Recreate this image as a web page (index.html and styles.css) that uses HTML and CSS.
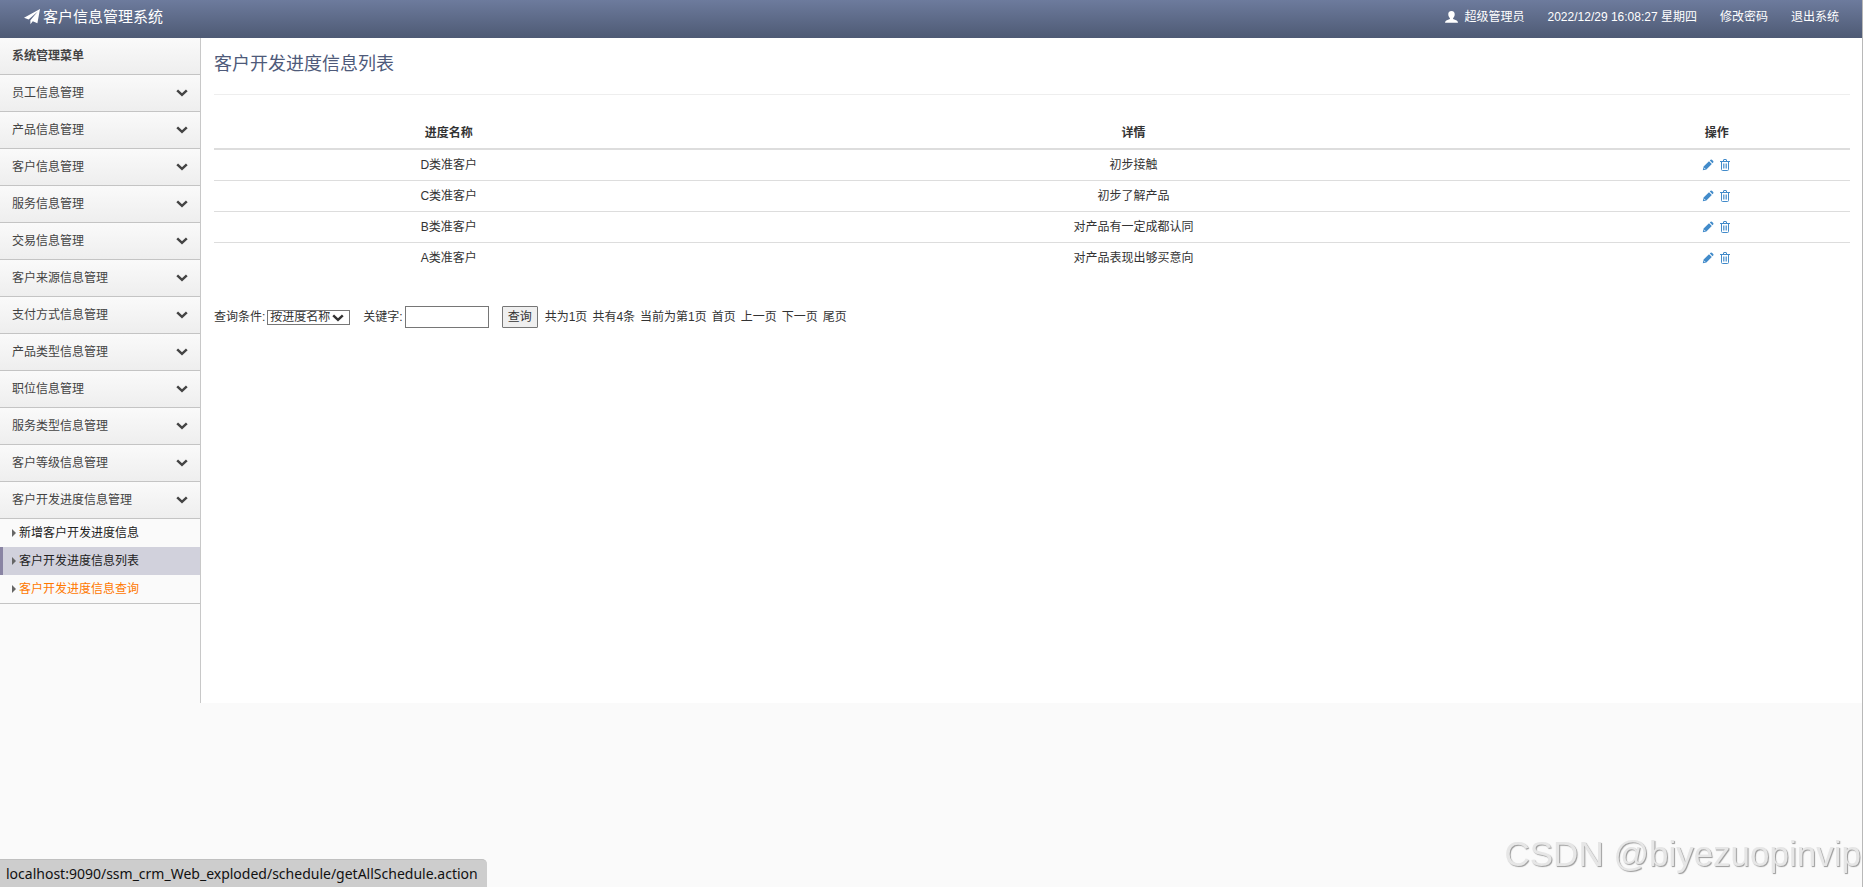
FILE: index.html
```html
<!DOCTYPE html>
<html lang="zh-CN">
  <head>
    <meta charset="UTF-8" />
    <title>客户信息管理系统</title>
    <link rel="stylesheet" href="styles.css" />
  </head>
  <body>
    <!-- shared icons -->
    <svg class="sprite" aria-hidden="true">
      <symbol id="chevron" viewBox="0 0 12 8">
        <path d="M1.2 1.4 L6 5.8 L10.8 1.4" fill="none" stroke="currentColor" stroke-width="2.5" />
      </symbol>
      <symbol id="pencil" viewBox="0 0 12 12">
        <path d="M0.8 11.2 L1.6 7.6 L7 2.2 L9.8 5 L4.4 10.4 Z M7.8 1.5 L8.6 0.8 Q9.4 0.2 10.2 0.9 L11.2 1.9 Q11.8 2.6 11.2 3.4 L10.5 4.2 Z" fill="currentColor" />
        <path d="M2 8.8 L3.2 10" fill="none" stroke="#fff" stroke-width="0.8" />
      </symbol>
      <symbol id="trash" viewBox="0 0 12 12">
        <path d="M1 2.5 H11 M4.5 2.5 V1 Q4.5 0.5 5 0.5 H7 Q7.5 0.5 7.5 1 V2.5 M2.5 2.5 V10.5 Q2.5 11.5 3.5 11.5 H8.5 Q9.5 11.5 9.5 10.5 V2.5" fill="none" stroke="currentColor" />
        <path d="M4.5 4.5 V9.5 M6 4.5 V9.5 M7.5 4.5 V9.5" fill="none" stroke="currentColor" stroke-width="0.8" />
      </symbol>
    </svg>

    <div class="header">
      <a class="brand" href="#">
        <svg class="icon-plane" viewBox="0 0 16 16">
          <path d="M16 0 L13.4 14.2 L8.8 12.2 L6.4 15.3 V11.2 L13.8 2.6 L4.6 10.6 L0 8.8 Z" fill="#fff" />
        </svg>
        客户信息管理系统
      </a>
      <div class="user-nav">
        <span class="user">
          <svg class="icon-user" viewBox="0 0 13 12">
            <path d="M6.5 0 C4.2 0 3.2 1.5 3.3 3.4 C3.4 5 4 6.2 4.9 7 V8 L1.3 9.4 Q0 10 0 11.8 H13 Q13 10 11.7 9.4 L8.1 8 V7 C9 6.2 9.6 5 9.7 3.4 C9.8 1.5 8.8 0 6.5 0 Z" fill="#fff" />
          </svg>
          超级管理员
        </span>
        <span>2022/12/29 16:08:27 星期四</span>
        <a href="#">修改密码</a>
        <a href="#">退出系统</a>
      </div>
    </div>

    <div class="wrapper">
      <div class="sidebar">
        <div class="menu-title">系统管理菜单</div>
        <a class="menu-item" href="#">员工信息管理<svg class="icon-chevron"><use href="#chevron" /></svg></a>
        <a class="menu-item" href="#">产品信息管理<svg class="icon-chevron"><use href="#chevron" /></svg></a>
        <a class="menu-item" href="#">客户信息管理<svg class="icon-chevron"><use href="#chevron" /></svg></a>
        <a class="menu-item" href="#">服务信息管理<svg class="icon-chevron"><use href="#chevron" /></svg></a>
        <a class="menu-item" href="#">交易信息管理<svg class="icon-chevron"><use href="#chevron" /></svg></a>
        <a class="menu-item" href="#">客户来源信息管理<svg class="icon-chevron"><use href="#chevron" /></svg></a>
        <a class="menu-item" href="#">支付方式信息管理<svg class="icon-chevron"><use href="#chevron" /></svg></a>
        <a class="menu-item" href="#">产品类型信息管理<svg class="icon-chevron"><use href="#chevron" /></svg></a>
        <a class="menu-item" href="#">职位信息管理<svg class="icon-chevron"><use href="#chevron" /></svg></a>
        <a class="menu-item" href="#">服务类型信息管理<svg class="icon-chevron"><use href="#chevron" /></svg></a>
        <a class="menu-item" href="#">客户等级信息管理<svg class="icon-chevron"><use href="#chevron" /></svg></a>
        <a class="menu-item" href="#">客户开发进度信息管理<svg class="icon-chevron"><use href="#chevron" /></svg></a>
        <div class="submenu">
          <a href="#">新增客户开发进度信息</a>
          <a class="active" href="#">客户开发进度信息列表</a>
          <a class="current" href="#">客户开发进度信息查询</a>
        </div>
      </div>

      <div class="content">
        <h1>客户开发进度信息列表</h1>
        <table class="table">
          <thead>
            <tr>
              <th class="col-name">进度名称</th>
              <th class="col-detail">详情</th>
              <th>操作</th>
            </tr>
          </thead>
          <tbody>
            <tr>
              <td>D类准客户</td>
              <td>初步接触</td>
              <td>
                <div class="actions">
                  <a href="#" aria-label="编辑"><svg><use href="#pencil" /></svg></a>
                  <a href="#" aria-label="删除"><svg><use href="#trash" /></svg></a>
                </div>
              </td>
            </tr>
            <tr>
              <td>C类准客户</td>
              <td>初步了解产品</td>
              <td>
                <div class="actions">
                  <a href="#" aria-label="编辑"><svg><use href="#pencil" /></svg></a>
                  <a href="#" aria-label="删除"><svg><use href="#trash" /></svg></a>
                </div>
              </td>
            </tr>
            <tr>
              <td>B类准客户</td>
              <td>对产品有一定成都认同</td>
              <td>
                <div class="actions">
                  <a href="#" aria-label="编辑"><svg><use href="#pencil" /></svg></a>
                  <a href="#" aria-label="删除"><svg><use href="#trash" /></svg></a>
                </div>
              </td>
            </tr>
            <tr>
              <td>A类准客户</td>
              <td>对产品表现出够买意向</td>
              <td>
                <div class="actions">
                  <a href="#" aria-label="编辑"><svg><use href="#pencil" /></svg></a>
                  <a href="#" aria-label="删除"><svg><use href="#trash" /></svg></a>
                </div>
              </td>
            </tr>
          </tbody>
        </table>

        <form class="search">
          <div class="field">
            <label for="cond">查询条件:</label>
            <div class="select-box">
              <select id="cond" name="cond">
                <option>按进度名称</option>
              </select>
              <svg class="select-arrow"><use href="#chevron" /></svg>
            </div>
          </div>
          <div class="field">
            <label for="keyword">关键字:</label>
            <input type="text" id="keyword" name="name" />
          </div>
          <button type="button">查询</button>
          <div class="pager">
            <span>共为1页</span>
            <span>共有4条</span>
            <span>当前为第1页</span>
            <a href="#">首页</a>
            <a href="#">上一页</a>
            <a href="#">下一页</a>
            <a href="#">尾页</a>
          </div>
        </form>
      </div>
    </div>

    <div class="status-bar">localhost:9090/ssm_crm_Web_exploded/schedule/getAllSchedule.action</div>
    <div class="watermark">CSDN @biyezuopinvip</div>
  </body>
</html>
```
FILE: styles.css
```css
* {
  box-sizing: border-box;
}
body {
  margin: 0;
  min-height: 100vh;
  background: #fafafa;
  border-right: 1px solid #b8b8b8;
  color: #333;
  font-family: "Liberation Sans", "Noto Sans CJK SC", sans-serif;
  font-size: 12px;
  line-height: 18px;
}
a {
  color: inherit;
  text-decoration: none;
}
.sprite {
  display: none;
}

.header {
  display: flex;
  justify-content: space-between;
  height: 38px;
  padding: 0 23px 0 24px;
  background: linear-gradient(#6d7b9d, #4e5a74);
  color: #fff;
  line-height: 34px;
}
.brand {
  display: flex;
  align-items: center;
  gap: 3px;
  height: 34px;
  font-size: 15px;
}
.icon-plane {
  width: 16px;
  height: 16px;
}
.user-nav {
  display: flex;
  gap: 23px;
}
.user {
  display: flex;
  align-items: center;
  gap: 7px;
  height: 34px;
}
.icon-user {
  width: 13px;
  height: 12px;
}

.wrapper {
  display: flex;
  min-height: 75vh;
}
.sidebar {
  width: 201px;
  flex-shrink: 0;
  border-right: 1px solid #c8c8c8;
}
.menu-title,
.menu-item {
  display: flex;
  align-items: center;
  justify-content: space-between;
  height: 37px;
  padding: 0 12px;
  border-bottom: 1px solid #c4c4c4;
  background: linear-gradient(#fafafa, #eee);
  color: #444;
}
.menu-title {
  font-weight: bold;
}
.icon-chevron {
  width: 12px;
  height: 8px;
}
.submenu {
  border-bottom: 1px solid #c4c4c4;
}
.submenu a {
  display: flex;
  align-items: center;
  gap: 3px;
  height: 28px;
  padding-left: 12px;
  color: #222;
}
.submenu a::before {
  content: "";
  border: 4px solid transparent;
  border-left-color: #666;
  border-right: 0;
}
.submenu .active {
  padding-left: 9px;
  border-left: 3px solid #8984a3;
  background: #d1d1dc;
}
.submenu .current {
  color: #ff7800;
}

.content {
  flex: 1;
  padding: 0 12px 0 13px;
  background: #fff;
}
h1 {
  margin: 0 0 22px;
  padding: 13px 0 17px;
  border-bottom: 1px solid #eee;
  color: #4e5a7a;
  font-size: 18px;
  font-weight: normal;
  line-height: 26px;
}
.table {
  width: 100%;
  border-collapse: separate;
  border-spacing: 0;
  table-layout: fixed;
  text-align: center;
}
.table th,
.table td {
  padding: 6px;
  border-bottom: 1px solid #ddd;
}
.table th {
  padding: 7px 6px 5px;
  border-bottom-width: 2px;
  line-height: 19px;
}
.table tr:last-child td {
  border-bottom: 0;
}
.table .col-name {
  width: 28.7%;
}
.table .col-detail {
  width: 55%;
}
.actions {
  display: flex;
  align-items: center;
  justify-content: center;
  gap: 5px;
  height: 18px;
  color: #428bca;
}
.actions svg {
  display: block;
  width: 12px;
  height: 12px;
}

.search {
  display: flex;
  align-items: center;
  gap: 13px;
  margin-top: 33px;
}
.field {
  display: flex;
  align-items: center;
  gap: 2px;
}
.search select,
.search input,
.search button {
  border: 1px solid #767676;
  border-radius: 0;
  color: #333;
  font: inherit;
}
.select-box {
  position: relative;
  height: 15px;
}
.search select {
  display: block;
  width: 83px;
  height: 15px;
  padding: 0 2px;
  appearance: none;
  background: #fff;
  line-height: 13px;
}
/* arrow over the native select */
.select-arrow {
  position: absolute;
  top: 4px;
  right: 6px;
  width: 12px;
  height: 8px;
  pointer-events: none;
}
.search input {
  width: 84px;
  height: 22px;
  padding: 1px 2px;
}
.search button {
  width: 36px;
  height: 22px;
  padding: 0;
  border-radius: 1px;
  background: #efefef;
}
.pager {
  display: flex;
  gap: 5px;
  margin-left: -6px;
}

.status-bar {
  position: fixed;
  left: 0;
  bottom: 0;
  padding: 4px 9px 3px 6px;
  border-top: 1px solid #c0c0c0;
  border-top-right-radius: 5px;
  background: #cdcdcd;
  color: #111;
  font-family: "Noto Sans", sans-serif;
  font-size: 14px;
  line-height: 20px;
}
.watermark {
  position: fixed;
  right: 2px;
  bottom: 13px;
  color: #e6e6e6;
  font-size: 35px;
  line-height: 40px;
  text-shadow: 1px 1px 1px #999;
}
```
